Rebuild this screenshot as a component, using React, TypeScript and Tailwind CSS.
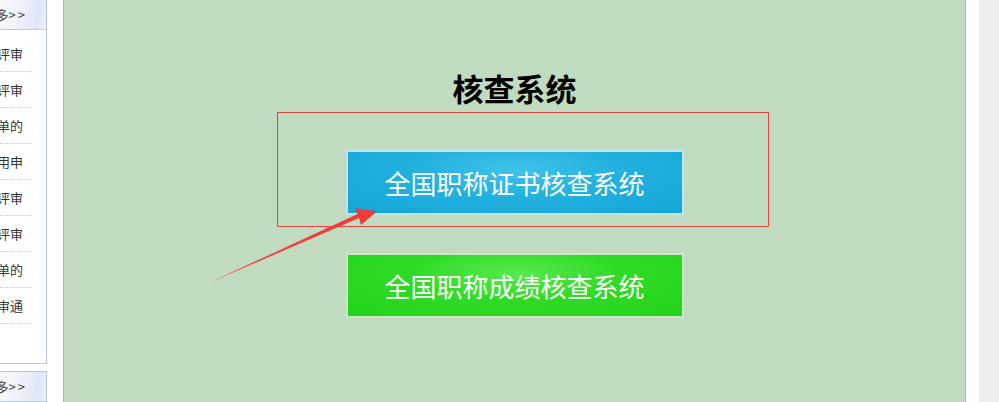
const items = [
  "关于做好2023年度职称评审",
  "关于开展高级职称评审",
  "关于公布通过人员名单的",
  "关于做好专业技术人员聘用申",
  "关于开展中级职称评审",
  "关于组织开展职称评审",
  "关于公布评审结果名单的",
  "关于职称评审通",
]

function SideHeader() {
  return (
    <div className="flex h-[30px] items-center justify-end overflow-hidden whitespace-nowrap border-b border-[#b9cbe0] bg-[linear-gradient(100deg,#f7f8fd_0%,#eef1fa_45%,#dfe5f5_80%,#eef1fa_100%)] pr-[19px] text-[13px] text-[#444]">
      <span>更多<span className="tracking-[2px]">&gt;&gt;</span></span>
    </div>
  )
}

function Sidebar() {
  return (
    <div className="flex w-[47px] shrink-0 flex-col" style={{ fontFamily: '"Noto Sans CJK SC", "Noto Sans", sans-serif' }}>
      <div className="h-[369px] border-r border-b border-[#b3c6dc] bg-white">
        <SideHeader />
        <ul className="pt-[6px]">
          {items.map((t) => (
            <li key={t} className="h-[36px] pr-[14px]">
              <div className="flex h-full items-center justify-end overflow-hidden whitespace-nowrap border-b border-dotted border-[#c8c8c8] text-[13px] text-[#333]">
                <span className="mr-[9px]">{t}</span>
              </div>
            </li>
          ))}
        </ul>
      </div>
      <div className="mt-[7px] flex-1 border-t border-r border-[#b3c6dc] bg-white">
        <SideHeader />
      </div>
    </div>
  )
}

function Arrow() {
  return (
    <svg className="pointer-events-none absolute left-0 top-0" width="999" height="402" viewBox="0 0 999 402">
      <polygon
        points="211,282 359,218 361,225 377,211.5 355,208 357.5,214"
        fill="#f23c3c"
      />
    </svg>
  )
}

export default function App() {
  const cjk = { fontFamily: '"Noto Sans CJK SC", "Noto Sans", sans-serif' }
  return (
    <div className="relative flex h-[402px] w-[999px] overflow-hidden bg-white">
      <Sidebar />
      <div className="w-[16px] shrink-0" />
      <main className="flex w-[903px] shrink-0 flex-col items-center border-x border-[#cbb784] bg-[#c0dbc0]" style={cjk}>
        <h1 className="mt-[69px] text-[31px] font-bold leading-[37px] text-black">核查系统</h1>
        <button className="mt-[44px] flex h-[65px] w-[338px] items-center justify-center border-2 border-[#c3e2ec] bg-[radial-gradient(ellipse_at_50%_30%,#3fc3ea_0%,#22b0de_45%,#14a6d8_100%)] text-[26px] text-white">
          全国职称证书核查系统
        </button>
        <button className="mt-[38px] flex h-[65px] w-[338px] items-center justify-center border-2 border-[#cbe8c4] bg-[radial-gradient(ellipse_at_50%_30%,#55ea4c_0%,#30da26_45%,#22d41a_100%)] text-[26px] text-white">
          全国职称成绩核查系统
        </button>
      </main>
      <div className="w-[13px] shrink-0 bg-white" />
      <div className="flex-1 bg-[#ededed]" />

      <div className="pointer-events-none absolute left-[277px] top-[112px] h-[115px] w-[492px] border border-[#e0453f]" />
      <Arrow />
    </div>
  )
}
